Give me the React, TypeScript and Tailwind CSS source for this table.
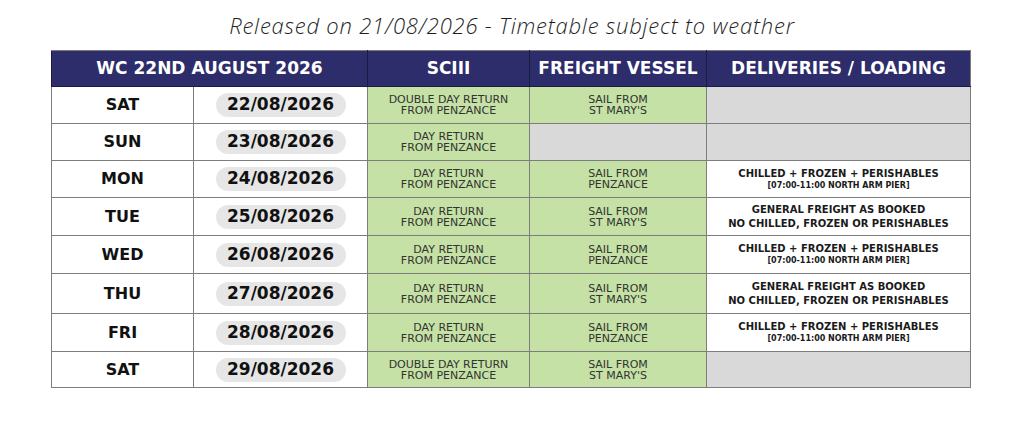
import React from 'react';

type Row = {
  day: string;
  date: string;
  sciii: string[];
  freight: string[] | null;
  delivery: 'chilled' | 'general' | null;
  h: string;
};

const ROWS: Row[] = [
  { day: 'SAT', date: '22/08/2026', sciii: ['DOUBLE DAY RETURN', 'FROM PENZANCE'], freight: ['SAIL FROM', "ST MARY'S"], delivery: null, h: 'h-[37px]' },
  { day: 'SUN', date: '23/08/2026', sciii: ['DAY RETURN', 'FROM PENZANCE'], freight: null, delivery: null, h: 'h-[37px]' },
  { day: 'MON', date: '24/08/2026', sciii: ['DAY RETURN', 'FROM PENZANCE'], freight: ['SAIL FROM', 'PENZANCE'], delivery: 'chilled', h: 'h-[37px]' },
  { day: 'TUE', date: '25/08/2026', sciii: ['DAY RETURN', 'FROM PENZANCE'], freight: ['SAIL FROM', "ST MARY'S"], delivery: 'general', h: 'h-[38px]' },
  { day: 'WED', date: '26/08/2026', sciii: ['DAY RETURN', 'FROM PENZANCE'], freight: ['SAIL FROM', 'PENZANCE'], delivery: 'chilled', h: 'h-[38px]' },
  { day: 'THU', date: '27/08/2026', sciii: ['DAY RETURN', 'FROM PENZANCE'], freight: ['SAIL FROM', "ST MARY'S"], delivery: 'general', h: 'h-[40px]' },
  { day: 'FRI', date: '28/08/2026', sciii: ['DAY RETURN', 'FROM PENZANCE'], freight: ['SAIL FROM', 'PENZANCE'], delivery: 'chilled', h: 'h-[38px]' },
  { day: 'SAT', date: '29/08/2026', sciii: ['DOUBLE DAY RETURN', 'FROM PENZANCE'], freight: ['SAIL FROM', "ST MARY'S"], delivery: null, h: 'h-[36px]' },
];

const BOLD = "font-['DejaVu_Sans',sans-serif] font-bold";

function SmallLines({ lines }: { lines: string[] }) {
  return (
    <div className="font-['DejaVu_Sans',sans-serif] text-[11px] leading-[11px] text-[#333333]">
      {lines.map((l) => (
        <div key={l}>{l}</div>
      ))}
    </div>
  );
}

function Delivery({ kind }: { kind: 'chilled' | 'general' }) {
  if (kind === 'chilled') {
    return (
      <div className={`${BOLD} text-[#1a1a1a]`}>
        <div className="text-[10px] leading-[13px]">CHILLED + FROZEN + PERISHABLES</div>
        <div className="text-[8px] leading-[12px]">[07:00-11:00 NORTH ARM PIER]</div>
      </div>
    );
  }
  return (
    <div className={`${BOLD} text-[10px] leading-[14px] text-[#1a1a1a]`}>
      <div>GENERAL FREIGHT AS BOOKED</div>
      <div>NO CHILLED, FROZEN OR PERISHABLES</div>
    </div>
  );
}

export default function App() {
  const cell = 'border border-[#7d7d7d] text-center align-middle p-0';
  const head = `border border-[#1c1c40] border-t-[#7d7d7d] text-white text-[17px] ${BOLD}`;
  return (
    <div className="w-[1024px] h-[448px] bg-white">
      <div className="pt-[12px] h-[50px] text-center font-['Open_Sans',sans-serif] italic font-light text-[22px] leading-[26px] tracking-[0.8px] text-[#1f1f1f]">
        Released on 21/08/2026 - Timetable subject to weather
      </div>
      <table className="ml-[51px] w-[919px] table-fixed border-collapse border border-[#7d7d7d]">
        <colgroup>
          <col className="w-[142px]" />
          <col className="w-[174px]" />
          <col className="w-[162px]" />
          <col className="w-[177px]" />
          <col className="w-[264px]" />
        </colgroup>
        <thead>
          <tr className="h-[36px] bg-[#2d2d6b]">
            <th colSpan={2} className={head}>WC 22ND AUGUST 2026</th>
            <th className={head}>SCIII</th>
            <th className={head}>FREIGHT VESSEL</th>
            <th className={`${head} border-r-[#7d7d7d]`}>DELIVERIES / LOADING</th>
          </tr>
        </thead>
        <tbody>
          {ROWS.map((r) => (
            <tr key={r.date} className={r.h}>
              <td className={`${cell} ${BOLD} text-[16px] text-[#111111]`}>{r.day}</td>
              <td className={cell}>
                <div className={`mx-auto w-[130px] h-[24px] rounded-full bg-[#e6e6e6] flex items-center justify-center text-[17px] text-[#111111] ${BOLD}`}>
                  {r.date}
                </div>
              </td>
              <td className={`${cell} bg-[#c5e1a5]`}>
                <SmallLines lines={r.sciii} />
              </td>
              <td className={`${cell} ${r.freight ? 'bg-[#c5e1a5]' : 'bg-[#d9d9d9]'}`}>
                {r.freight && <SmallLines lines={r.freight} />}
              </td>
              <td className={`${cell} ${r.delivery ? 'bg-white' : 'bg-[#d9d9d9]'}`}>
                {r.delivery && <Delivery kind={r.delivery} />}
              </td>
            </tr>
          ))}
        </tbody>
      </table>
    </div>
  );
}
